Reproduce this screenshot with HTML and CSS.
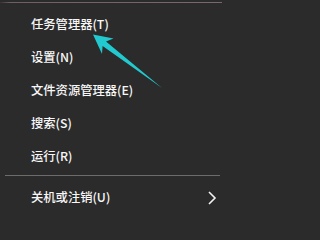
FILE: index.html
```html
<!DOCTYPE html>
<html lang="zh-CN">
<head>
<meta charset="utf-8">
<link rel="stylesheet" href="styles.css">
</head>
<body>
<div class="menu">
  <div class="topline"></div>
  <ul class="items">
    <li class="item">任务管理器(T)</li>
    <li class="item">设置(N)</li>
    <li class="item">文件资源管理器(E)</li>
    <li class="item">搜索(S)</li>
    <li class="item">运行(R)</li>
  </ul>
  <div class="sep"></div>
  <div class="item sub">
    <span>关机或注销(U)</span>
    <svg class="chev" width="10" height="14" viewBox="0 0 10 14"><path d="M2 1 L8 7 L2 13" fill="none" stroke="#f2f2f2" stroke-width="1.6"/></svg>
  </div>
  <svg class="arrow" width="222" height="205" viewBox="0 0 222 205">
    <polygon points="93,34.5 113.5,38.5 106,41.5 162,88 102.6,46 102,54" fill="#22c9cf"/>
  </svg>
</div>
</body>
</html>
```
FILE: styles.css
```css
html, body {
  margin: 0;
  padding: 0;
  background: #2b2b2b;
}
.menu {
  position: relative;
  width: 222px;
  height: 205px;
  overflow: hidden;
  background: #2b2b2b;
  font-family: "Noto Sans CJK SC", "Noto Sans", sans-serif;
  font-size: 12.3px;
  font-weight: 500;
  color: #f7f7f7;
}
.topline {
  height: 1px;
  margin-top: 2px;
  background: linear-gradient(to right, #3a3034 0, #705e65 10px, #7a686e 100%);
}
.items {
  list-style: none;
  margin: 5px 0 0 0;
  padding: 0;
}
.item {
  height: 33px;
  line-height: 33px;
  padding-left: 31px;
  white-space: nowrap;
}
.sep {
  height: 1px;
  margin: 2px 2px 0 5px;
  background: #6c6c6c;
}
.sub {
  display: flex;
  align-items: center;
  justify-content: space-between;
  padding-right: 5px;
  margin-top: 5px;
}
.chev {
  display: block;
}
.arrow {
  position: absolute;
  left: 0;
  top: 0;
}
```
